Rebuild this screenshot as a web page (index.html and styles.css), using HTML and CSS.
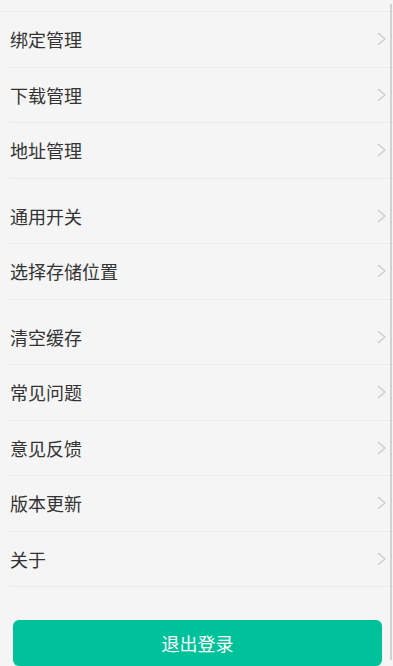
FILE: index.html
```html
<!DOCTYPE html>
<html lang="zh-CN">
<head>
  <meta charset="UTF-8">
  <title>设置</title>
  <link rel="stylesheet" href="styles.css">
</head>
<body>
  <div class="settings">
    <!-- 账号相关 -->
    <ul class="group">
      <li class="item"><span>绑定管理</span><svg class="arrow" viewBox="0 0 9 14"><polyline points="1,1 8,7 1,13"/></svg></li>
      <li class="item"><span>下载管理</span><svg class="arrow" viewBox="0 0 9 14"><polyline points="1,1 8,7 1,13"/></svg></li>
      <li class="item"><span>地址管理</span><svg class="arrow" viewBox="0 0 9 14"><polyline points="1,1 8,7 1,13"/></svg></li>
    </ul>

    <!-- 通用 -->
    <ul class="group">
      <li class="item"><span>通用开关</span><svg class="arrow" viewBox="0 0 9 14"><polyline points="1,1 8,7 1,13"/></svg></li>
      <li class="item"><span>选择存储位置</span><svg class="arrow" viewBox="0 0 9 14"><polyline points="1,1 8,7 1,13"/></svg></li>
    </ul>

    <!-- 其他 -->
    <ul class="group">
      <li class="item"><span>清空缓存</span><svg class="arrow" viewBox="0 0 9 14"><polyline points="1,1 8,7 1,13"/></svg></li>
      <li class="item"><span>常见问题</span><svg class="arrow" viewBox="0 0 9 14"><polyline points="1,1 8,7 1,13"/></svg></li>
      <li class="item"><span>意见反馈</span><svg class="arrow" viewBox="0 0 9 14"><polyline points="1,1 8,7 1,13"/></svg></li>
      <li class="item"><span>版本更新</span><svg class="arrow" viewBox="0 0 9 14"><polyline points="1,1 8,7 1,13"/></svg></li>
      <li class="item"><span>关于</span><svg class="arrow" viewBox="0 0 9 14"><polyline points="1,1 8,7 1,13"/></svg></li>
    </ul>

    <button class="logout">退出登录</button>
  </div>

  <div class="scrollbar"></div>
</body>
</html>
```

FILE: styles.css
```css
/* 设置页 */
body {
  margin: 0;
  background-color: #f5f5f5;
  font-family: "Noto Sans CJK SC", "Noto Sans", sans-serif;
  color: #333333;
  overflow: hidden;
}

.settings {
  padding-top: 11px;
}

.group {
  list-style: none;
  margin: 0 0 10px 0;
  padding: 0;
}

.group:first-child {
  border-top: 1px solid #ebebeb;
}

.item {
  display: flex;
  align-items: center;
  justify-content: space-between;
  height: 54.5px;
  margin-left: 10px;
  padding-right: 7px;
  border-bottom: 1px solid #ebebeb;
  font-size: 18px;
}

.arrow {
  width: 9px;
  height: 14px;
  fill: none;
  stroke: #c8c8c8;
  stroke-width: 1.1;
}

.logout {
  display: block;
  width: calc(100% - 24px);
  height: 46px;
  margin: 33px 11px 0 13px;
  border: none;
  border-radius: 6px;
  background-color: #00c29a;
  color: #ffffff;
  font-family: inherit;
  font-size: 18px;
}

/* 滚动条 */
.scrollbar {
  position: fixed;
  top: 4px;
  bottom: 6px;
  right: 1px;
  width: 2px;
  background-color: #d2d2d2;
}
```
